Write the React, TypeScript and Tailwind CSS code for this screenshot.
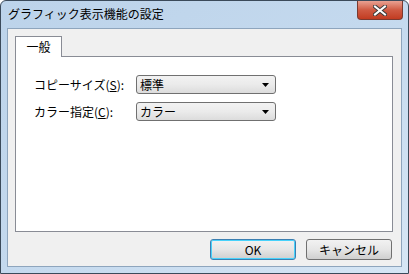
const font = { fontFamily: '"MS UI Gothic", "Noto Sans CJK JP", sans-serif' };

function Combo({ value }: { value: string }) {
  return (
    <div className="flex h-[19px] w-[140px] items-center justify-between rounded-[3px] border border-[#707070] bg-gradient-to-b from-[#f2f2f2] via-[#ebebeb] to-[#dcdcdc] pl-[3px] pr-[6px]">
      <span className="text-[12px] leading-none text-black">{value}</span>
      <svg width="7" height="4" viewBox="0 0 7 4">
        <path d="M0 0H7L3.5 4Z" fill="#000" />
      </svg>
    </div>
  );
}

function Button({ label, focused }: { label: string; focused?: boolean }) {
  return (
    <div
      className={
        'flex h-[21px] w-[86px] items-center justify-center rounded-[3px] border bg-gradient-to-b from-[#f2f2f2] via-[#e6e6e6] to-[#cfcfcf] text-[12px] leading-none text-black ' +
        (focused ? 'border-[#3c7fb1] shadow-[inset_0_0_0_1px_#48d2fb]' : 'border-[#707070]')
      }
    >
      {label}
    </div>
  );
}

export default function App() {
  return (
    <div style={font} className="h-[274px] w-[409px] select-none">
      <div className="flex h-full w-full flex-col rounded-t-[6px] border border-[#3b4a5a] bg-gradient-to-br from-[#bcd3ea] via-[#c4d9ee] to-[#d6e6f5]">
        {/* title bar */}
        <div className="flex h-[27px] items-start justify-between pl-[7px] pr-[5px]">
          <span className="mt-[7px] text-[12px] leading-none text-black">グラフィック表示機能の設定</span>
          <div className="flex h-[19px] w-[46px] items-center justify-center rounded-b-[4px] border border-t-0 border-[#7a3a30] bg-gradient-to-b from-[#e8a192] via-[#cf5a42] to-[#c23b20]">
            <svg width="14" height="11" viewBox="0 0 14 11">
              <path d="M2 1.5L12 9.5M12 1.5L2 9.5" stroke="#3a3a3a" strokeWidth="4" strokeLinecap="square" />
              <path d="M2 1.5L12 9.5M12 1.5L2 9.5" stroke="#fff" strokeWidth="2" strokeLinecap="square" />
            </svg>
          </div>
        </div>
        {/* client */}
        <div className="mx-[6px] mb-[6px] flex flex-1 flex-col border border-[#8ea5bd] bg-[#f0f0f0] pb-[6px] pl-[7px] pr-[8px] pt-[7px]">
          <div className="flex flex-col">
            <div className="flex">
              <div className="relative -mb-px flex h-[21px] w-[47px] items-center justify-center border border-b-0 border-[#898c95] bg-white text-[12px] leading-none text-black">
                一般
              </div>
            </div>
            <div className="flex h-[176px] flex-col gap-[8px] border border-[#898c95] bg-white pl-[18px] pr-[3px] pt-[18px]">
              <div className="flex items-center">
                <span className="w-[102px] text-[12px] leading-none text-black">
                  コピーサイズ(<span className="underline">S</span>):
                </span>
                <Combo value="標準" />
              </div>
              <div className="flex items-center">
                <span className="w-[102px] text-[12px] leading-none text-black">
                  カラー指定(<span className="underline">C</span>):
                </span>
                <Combo value="カラー" />
              </div>
            </div>
          </div>
          <div className="mt-auto flex justify-end gap-[10px] pr-px">
            <Button label="OK" focused />
            <Button label="キャンセル" />
          </div>
        </div>
      </div>
    </div>
  );
}
